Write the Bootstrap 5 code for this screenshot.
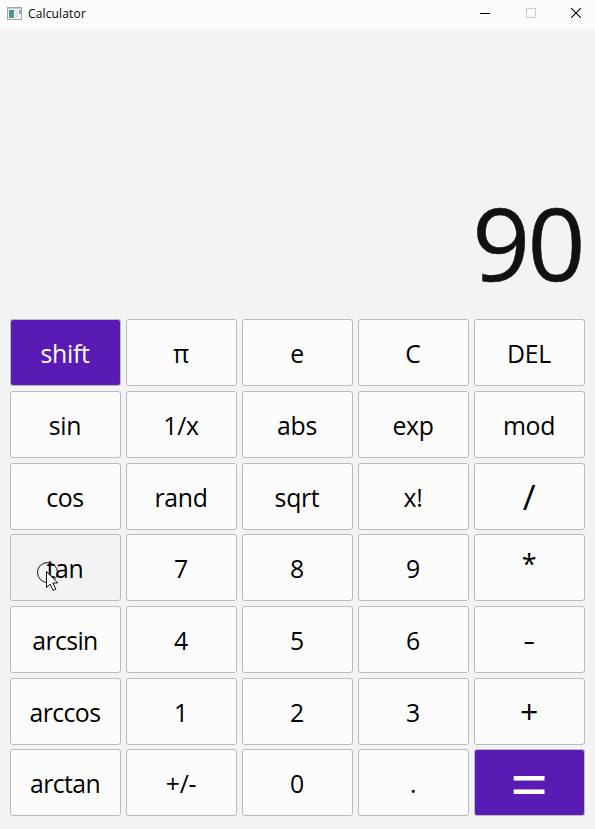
<!DOCTYPE html>
<html lang="en">
<head>
<meta charset="utf-8">
<meta name="viewport" content="width=device-width, initial-scale=1">
<title>Calculator</title>
<link href="https://cdn.jsdelivr.net/npm/bootstrap@5.3.0/dist/css/bootstrap.min.css" rel="stylesheet">
<style>
body{font-family:"Open Sans","Noto Sans",sans-serif;background:#f3f3f3;color:#000}
.titlebar{height:29px;background:#fcfcfc;font-size:12px;padding-left:7px}
.titlebar svg{margin-bottom:3px}
.titlebar .caption{font-family:"Open Sans",sans-serif;line-height:27px;margin:0 0 2px 6px;letter-spacing:.15px}
.winctl{width:45.5px;height:27px}
.winctls{margin-right:-4px;margin-bottom:3px}
.titlebar .winctl svg{margin:0}
.display{height:290.3px;font-size:101.5px;line-height:1;letter-spacing:-2.6px;color:#111;padding:0 12px 26px 0;-webkit-text-stroke:.5px #111}
.keys{grid-template-columns:repeat(5,111px);grid-auto-rows:67px;gap:4.67px 5px;padding-left:10px}
.key{--bs-btn-bg:#fcfcfc;--bs-btn-color:#000;--bs-btn-border-color:#bababa;--bs-btn-border-radius:3px;--bs-btn-padding-x:0;--bs-btn-padding-y:0;padding-right:1px;font-size:24.8px;letter-spacing:-.3px;line-height:66.6px;height:67px;white-space:nowrap}
.key-long{letter-spacing:-.6px}
.key-accent{--bs-btn-bg:#5a1bb5;--bs-btn-color:#fff}
.key-hover{--bs-btn-bg:#f3f3f3}
.key-op{font-size:32px}
.key-slash{font-size:35px}
.key-star{font-size:27px;line-height:58px;padding-bottom:7px}
.key-minus span{display:inline-block;transform:scale(1.15,.9)}
.key-eq{font-size:67px}
.pointer{left:26px;top:27px}
</style>
</head>
<body class="vh-100 overflow-hidden">
<header class="titlebar d-flex align-items-center">
  <svg width="15" height="13" viewBox="0 0 15 13"><defs><linearGradient id="g" x2="0.5" y2="1"><stop stop-color="#4d7fb0"/><stop offset="1" stop-color="#4aa57a"/></linearGradient></defs><rect x=".5" y=".5" width="14" height="12" fill="#f4f4f4" stroke="#a4a4a8"/><path d="M1 1.5h13" stroke="#c9c9cc"/><rect x="2" y="3" width="5" height="8" fill="url(#g)"/><rect x="8" y="3" width="3" height="8" fill="#e2e2e2"/><rect x="12" y="3" width="2" height="4" fill="#83b2b4"/></svg>
  <span class="caption">Calculator</span>
  <div class="winctls d-flex ms-auto">
    <span class="winctl d-flex align-items-center justify-content-center"><svg width="10" height="10" shape-rendering="crispEdges"><path d="M0 5.5h10" stroke="#000"/></svg></span>
    <span class="winctl d-flex align-items-center justify-content-center"><svg width="10" height="10" shape-rendering="crispEdges"><rect x=".5" y=".5" width="9" height="9" fill="none" stroke="#ccc"/></svg></span>
    <span class="winctl d-flex align-items-center justify-content-center"><svg width="10" height="10"><path d="M0 0l10 10M10 0L0 10" stroke="#000" stroke-width="1.1"/></svg></span>
  </div>
</header>
<main>
  <div class="display d-flex align-items-end justify-content-end"><span>90</span></div>
  <div class="keys d-grid">
    <button class="btn key key-accent">shift</button><button class="btn key">π</button><button class="btn key">e</button><button class="btn key">C</button><button class="btn key">DEL</button>
    <button class="btn key">sin</button><button class="btn key">1/x</button><button class="btn key">abs</button><button class="btn key">exp</button><button class="btn key">mod</button>
    <button class="btn key">cos</button><button class="btn key">rand</button><button class="btn key">sqrt</button><button class="btn key">x!</button><button class="btn key key-slash">/</button>
    <button class="btn key key-hover position-relative">tan<svg class="pointer position-absolute" width="24" height="30"><circle cx="10.5" cy="10.5" r="10" fill="none" stroke="#111"/><path d="M9.5 9.5v16l3.6-3.4 3 6.3 2.7-1.2-3-6.2h5z" fill="#fff" stroke="#111"/></svg></button><button class="btn key">7</button><button class="btn key">8</button><button class="btn key">9</button><button class="btn key key-star">*</button>
    <button class="btn key key-long">arcsin</button><button class="btn key">4</button><button class="btn key">5</button><button class="btn key">6</button><button class="btn key key-op key-minus"><span>-</span></button>
    <button class="btn key key-long">arccos</button><button class="btn key">1</button><button class="btn key">2</button><button class="btn key">3</button><button class="btn key key-op">+</button>
    <button class="btn key key-long">arctan</button><button class="btn key">+/-</button><button class="btn key">0</button><button class="btn key">.</button><button class="btn key key-accent key-eq">=</button>
  </div>
</main>
<script src="https://cdn.jsdelivr.net/npm/bootstrap@5.3.0/dist/js/bootstrap.bundle.min.js"></script>
</body>
</html>
